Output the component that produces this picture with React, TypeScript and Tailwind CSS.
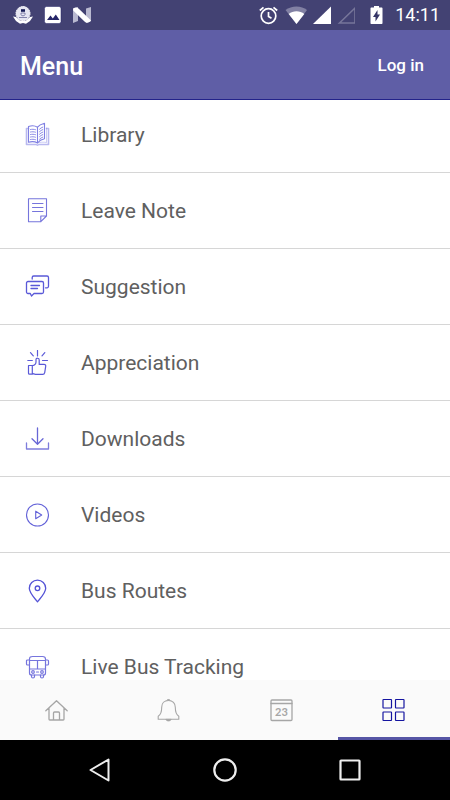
import type { ReactNode } from "react";

const line = {
  width: 25,
  height: 25,
  viewBox: "0 0 25 25",
  fill: "none",
  stroke: "currentColor",
  strokeLinejoin: "round",
  strokeLinecap: "round",
  "aria-hidden": true,
} as const;

const menu: { label: string; tone: string; icon: ReactNode }[] = [
  {
    label: "Library",
    tone: "text-[#7f7fe2]",
    icon: (
      <svg {...line}>
        <path d="M3.500 6.500h-2v16H11c1 .8 2 .8 3 0h9.500v-16h-2" strokeWidth="1.600" opacity=".55" />
        <path d="M21.500 6v14.500c-3-.6-6-.4-9 .5" opacity=".4" />
        <path d="M12.500 21V5.200C10 3.600 6 3.600 3.500 4.600v15.600c3-.9 6.500-.7 9 .8 1.600-2.200 4-3.600 7-4.200V1.300c-3 .8-5.500 2-7 3.900" strokeWidth="1.100" />
        <path d="M5.500 7.500c1.800-.4 3.200-.3 5 .2m-5 2.300c1.800-.4 3.200-.3 5 .2m-5 2.300c1.800-.4 3.200-.3 5 .2m-5 2.300c1.800-.4 3.200-.3 5 .2m-5 2.300c1.800-.4 3.200-.3 5 .2M14.500 7.200c1-1 2-1.600 3.300-2.100m-3.300 4.600c1-1 2-1.600 3.300-2.100m-3.300 4.600c1-1 2-1.600 3.300-2.100m-3.300 4.600c1-1 2-1.600 3.300-2.100m-3.300 4.600c1-1 2-1.600 3.300-2.100" strokeWidth=".9" />
      </svg>
    ),
  },
  {
    label: "Leave Note",
    tone: "text-[#7675dc]",
    icon: (
      <svg {...line}>
        <path d="M3.500.8h18V18l-5.700 5.700H3.500zM15.800 23.700V18h5.700" strokeWidth="1.100" />
        <path d="M7.500 5.500h10.500m-10.500 4h10.500m-10.500 4h10.500" />
      </svg>
    ),
  },
  {
    label: "Suggestion",
    tone: "text-[#5a59d8]",
    icon: (
      <svg {...line} strokeWidth="1.300">
        <path d="M3 7.500h14A1.500 1.500 0 0 1 18.500 9v9a1.500 1.500 0 0 1-1.500 1.500H9L6.500 22l-1.200-2.500H3A1.500 1.500 0 0 1 1.500 18V9A1.500 1.500 0 0 1 3 7.500z" />
        <path d="M7.200 5V3.500A1.500 1.500 0 0 1 8.700 2h13.300a1.500 1.500 0 0 1 1.500 1.500v8.800a1.500 1.500 0 0 1-1.500 1.500h-1.500M6 11.500h8.500M6 14.500h6.500" />
      </svg>
    ),
  },
  {
    label: "Appreciation",
    tone: "text-[#5a59d8]",
    icon: (
      <svg {...line} strokeWidth="1.200">
        <path d="M12.500.5V6M5.500 2.700l2.800 3.100M19.800 2.700 17 5.800M2.800 10.500h4.500M17.500 10.500h5" />
        <path d="M3.500 15.500h3.800v8.700H4.500a1 1 0 0 1-1-1zM7.300 15.700c2.200-.4 3.700-1.700 3.700-3.700V9.700c0-2 3.200-2 3.200.2V14.400h4.800c1.300 0 1.900.8 1.700 2l-1 6.200c-.2 1-.9 1.700-2 1.700H10.500c-1 0-1.800-.5-3.200-.9" />
      </svg>
    ),
  },
  {
    label: "Downloads",
    tone: "text-[#6766d6]",
    icon: (
      <svg {...line} strokeWidth="1.300">
        <path d="M12.500 2v16M7 12.700l5.500 5.500 5.500-5.500" />
        <path d="M1.500 17v6h22v-6" opacity=".85" />
      </svg>
    ),
  },
  {
    label: "Videos",
    tone: "text-[#6362d8]",
    icon: (
      <svg {...line} strokeWidth="1.100">
        <circle cx="12.500" cy="13" r="11" />
        <path d="M10.700 9.200v7.600l6-3.800z" />
      </svg>
    ),
  },
  {
    label: "Bus Routes",
    tone: "text-[#5453d6]",
    icon: (
      <svg {...line} strokeWidth="1.300">
        <path d="M12.500 23.800C9.500 20 4.300 15 4.300 10.300a8.200 8.200 0 0 1 16.400 0c0 4.700-5.200 9.700-8.200 13.500z" />
        <circle cx="12.500" cy="10.300" r="2.300" />
      </svg>
    ),
  },
  {
    label: "Live Bus Tracking",
    tone: "text-[#7675dd]",
    icon: (
      <svg {...line} strokeWidth="1.200">
        <path d="M4.500 5c0-1.800 1.200-2.500 3-2.500h10c1.800 0 3 .7 3 2.500v14c0 1.500-.5 2-2 2h-12c-1.500 0-2-.5-2-2zM4.500 6.500h16M4.500 15h16M12.500 6.500V15M4.500 11V6H2.500c-.7 0-1 .3-1 1v3c0 .7.300 1 1 1zM20.500 11V6h2c.7 0 1 .3 1 1v3c0 .7-.3 1-1 1z" />
        <circle cx="8" cy="18" r="1.300" />
        <circle cx="17" cy="18" r="1.300" />
        <path d="M11.500 18h2M6.500 21v1.500a1.500 1.500 0 0 0 3 0V21M15.500 21v1.500a1.500 1.500 0 0 0 3 0V21" />
      </svg>
    ),
  },
];

const tabs: { label: string; active?: boolean; icon: ReactNode }[] = [
  {
    label: "Home",
    icon: (
      <svg {...line}>
        <path d="M1.800 12.800 12.500 2.700l10.700 10.100M5 10v11.200c0 .5.300.8.800.8h13.400c.5 0 .8-.3.800-.8V10M9.500 22v-7c0-.6.400-1 1-1h4c.6 0 1 .4 1 1v7" strokeWidth="1.300" />
      </svg>
    ),
  },
  {
    label: "Notifications",
    icon: (
      <svg {...line}>
        <path d="M12.500 2.500C8.300 2.500 5.700 5.200 5.700 9.200c0 4.500-.7 7.300-3.500 9v3h20.600v-3c-2.800-1.700-3.500-4.500-3.500-9 0-4-2.600-6.700-6.800-6.700z" strokeWidth="1.100" />
        <path d="M10.800 2.300c.3-1.200 3.100-1.200 3.400 0M10 21.700c.8 1.700 4.200 1.700 5 0z" fill="currentColor" />
      </svg>
    ),
  },
  {
    label: "Calendar",
    icon: (
      <svg {...line}>
        <rect x="2" y="2" width="21" height="20.500" rx="1" strokeWidth="1.300" />
        <path d="M2 5.500h21" strokeWidth="1.300" />
        <text x="12.500" y="18" textAnchor="middle" fill="currentColor" stroke="none" className="font-[Lato] text-[11px] font-bold">
          23
        </text>
      </svg>
    ),
  },
  {
    label: "Menu",
    active: true,
    icon: (
      <svg {...line} strokeWidth="1.200">
        <rect x="2" y="1.500" width="8.500" height="8.500" rx=".5" />
        <rect x="14.500" y="1.500" width="8.500" height="8.500" rx=".5" />
        <rect x="2" y="14" width="8.500" height="8.500" rx=".5" />
        <rect x="14.500" y="14" width="8.500" height="8.500" rx=".5" />
      </svg>
    ),
  },
];

function StatusBar() {
  return (
    <div className="flex h-[30px] shrink-0 items-center justify-between bg-[#434273] pr-[10px] pl-[12px] text-white">
      <div className="flex items-center gap-[9px]">
        <svg width="22" height="20" viewBox="0 0 22 20" aria-hidden="true">
          <path d="m1 11.500 3 4.500 4 2.800 3-.8 3 .8 4-2.800 3-4.500-3 .5-4 3.500H8L4 12z" fill="#fff" />
          <circle cx="11" cy="8.500" r="7" fill="#e6e6f2" stroke="#fff" strokeWidth="1" strokeDasharray="1.600 .6" />
          <path d="M9 4.200h4v2.600H9z" fill="#161b55" />
          <path d="M9 8h4v1.500c0 1.800-4 1.800-4 0zM7 12.500h8" fill="none" stroke="#6b6b9b" strokeWidth=".8" />
        </svg>
        <svg width="20" height="20" viewBox="0 0 20 20" aria-hidden="true">
          <rect x="1.500" y="1.500" width="16.500" height="17" rx="2" fill="#fff" stroke="#252568" strokeWidth=".5" />
          <path d="m4 15 3.500-4.500 2.300 2.900 3-4L16.500 15z" fill="#252568" />
        </svg>
        <svg width="20" height="20" viewBox="0 0 20 20" aria-hidden="true">
          <path d="M1 3.500 6 2v14l-5 2zM14 3.500 19 2v14l-5 2z" fill="#b9b9d0" />
          <path d="M1.200 3.500C3 2.200 5 2 6.500 3.500L19 15.500c-1.500 2.300-4.500 3-6.500 1L1.200 5.500z" fill="#fff" />
        </svg>
      </div>
      <div className="flex items-center gap-[6px]">
        <svg width="20" height="20" viewBox="0 0 20 20" fill="none" stroke="#fff" strokeWidth="1.700" aria-hidden="true">
          <circle cx="9.500" cy="11" r="7.300" />
          <path d="M9.500 7v4.500l3 1.800M.8 5.500 4.500 2.300M18.200 5.500 14.500 2.300" />
        </svg>
        <svg width="22" height="20" viewBox="0 0 22 20" aria-hidden="true">
          <path d="M11.500 19 .5 5C6.500.2 16.500.2 22 5z" fill="#8180a3" />
          <path d="M11.500 19 3.700 9C8 5.300 15 5.300 19.300 9z" fill="#fff" />
        </svg>
        <svg width="18" height="20" viewBox="0 0 18 20" aria-hidden="true">
          <path d="M0 19 18 1.500V19z" fill="#fff" />
        </svg>
        <svg width="18" height="20" viewBox="0 0 18 20" aria-hidden="true">
          <path d="M2.500 18 18 3V18z" fill="none" stroke="#77769a" strokeWidth="1.600" />
        </svg>
        <svg width="28" height="20" viewBox="0 0 28 20" aria-hidden="true">
          <path d="M13 1h5v1.500H20.500c.6 0 1 .4 1 1V18c0 .6-.4 1-1 1H10.500c-.6 0-1-.4-1-1V3.500c0-.6.4-1 1-1H13z" fill="#fff" />
          <path d="M16.500 5v4.500H19L14.500 16.500V12H12z" fill="#353567" />
        </svg>
        <span className="text-[18px] leading-5">14:11</span>
      </div>
    </div>
  );
}

export default function App() {
  return (
    <div className="flex h-screen flex-col overflow-hidden bg-white font-[Roboto,sans-serif]">
      <StatusBar />
      <header className="z-10 flex h-[70px] shrink-0 items-center justify-between border-b border-[#23238a] bg-[#5f5ea6] pr-[26px] pl-5 text-white">
        <h1 className="pt-1 text-[25px] leading-8 font-medium">Menu</h1>
        <button className="text-[17px] leading-6 font-medium">Log in</button>
      </header>

      <main className="min-h-0 flex-1 overflow-hidden">
        <ul className="-mt-[3px]">
          {menu.map((item) => (
            <li key={item.label} className="border-b border-[#d6d6d6]">
              <a href="#" className="flex h-[75px] items-center gap-[31px] pl-[25px]">
                <span className={item.tone}>{item.icon}</span>
                <span className="text-[21px] leading-7 text-[#606060]">{item.label}</span>
              </a>
            </li>
          ))}
        </ul>
      </main>

      <nav className="grid h-[60px] shrink-0 grid-cols-4 bg-[#fafafa]">
        {tabs.map((tab) => (
          <button
            key={tab.label}
            aria-label={tab.label}
            className={
              tab.active
                ? "flex items-center justify-center border-b-[3px] border-[#5655a5] pt-[3px] text-[#1414a0]"
                : "flex items-center justify-center text-[#a6a6a6]"
            }
          >
            {tab.icon}
          </button>
        ))}
      </nav>

      <div className="flex h-[60px] shrink-0 items-center justify-center gap-[101px] bg-black text-[#eee]">
        <button aria-label="Back">
          <svg {...line} width="24" height="24" viewBox="0 0 24 24" strokeWidth="2">
            <path d="M20.500 1.500v21L2.500 12z" />
          </svg>
        </button>
        <button aria-label="Home">
          <svg {...line} width="24" height="24" viewBox="0 0 24 24" strokeWidth="2.200">
            <circle cx="12" cy="12" r="10.700" />
          </svg>
        </button>
        <button aria-label="Recent apps">
          <svg {...line} width="24" height="24" viewBox="0 0 24 24" strokeWidth="2.200">
            <rect x="2.500" y="2.500" width="19" height="19" rx=".5" />
          </svg>
        </button>
      </div>
    </div>
  );
}
